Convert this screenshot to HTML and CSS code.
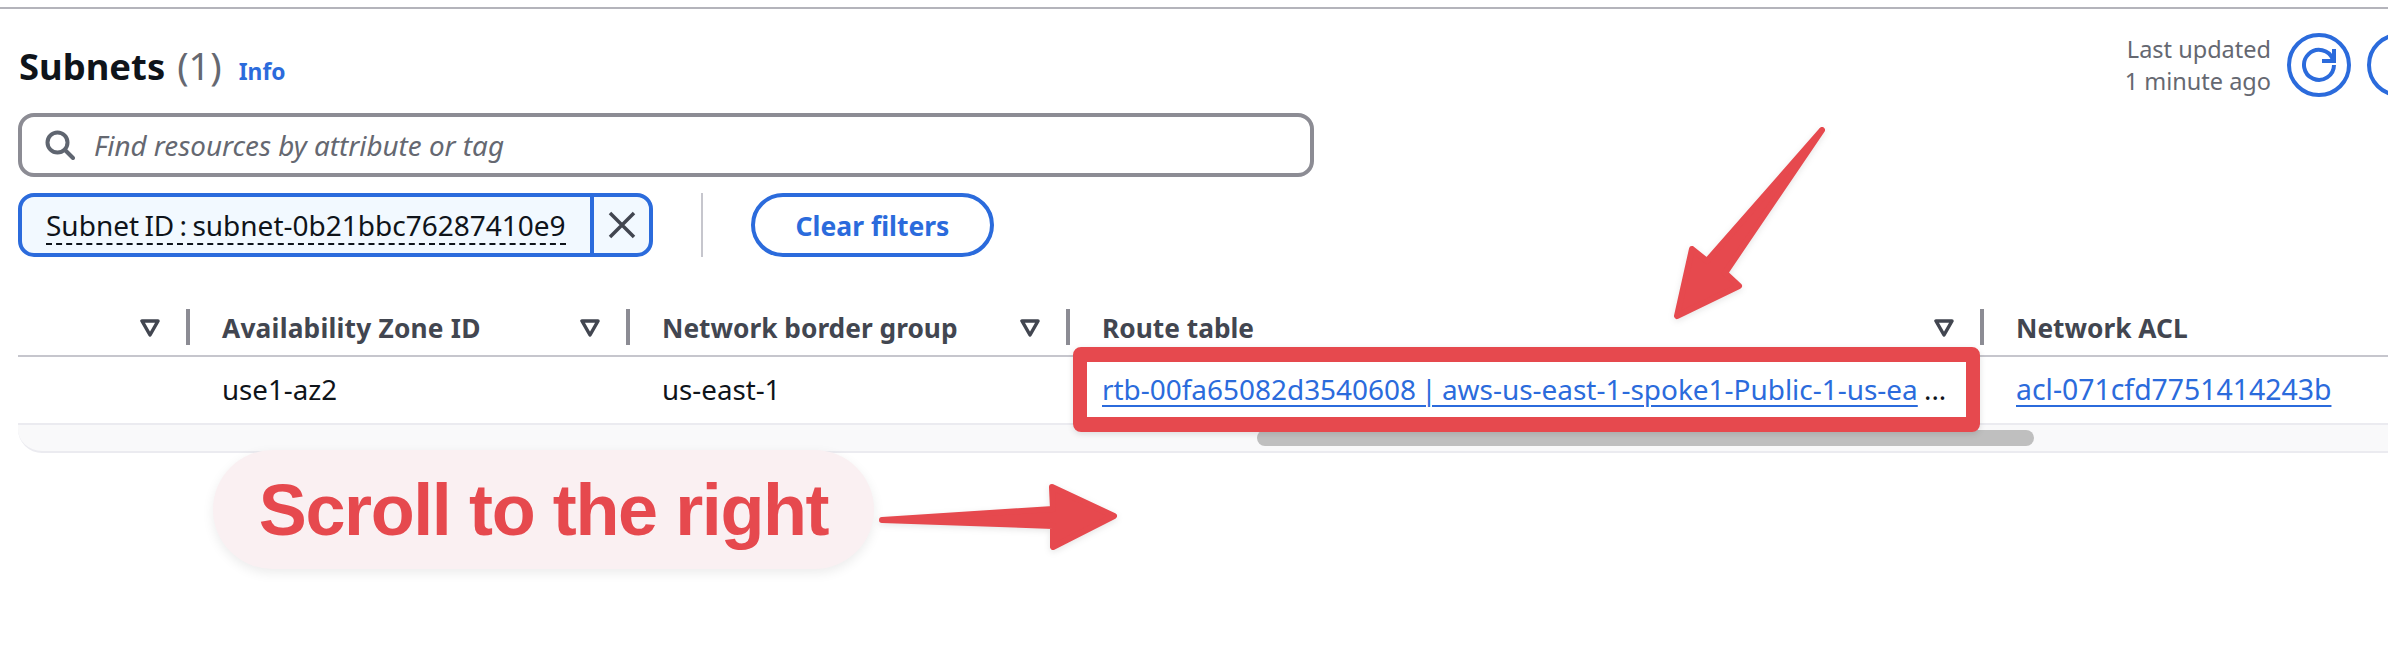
FILE: index.html
```html
<!DOCTYPE html>
<html lang="en">
<head>
<meta charset="utf-8">
<title>Subnets</title>
<link rel="stylesheet" href="styles.css">
</head>
<body>
<div class="page">
  <div class="topline"></div>
  <header class="head">
    <div class="title"><h2>Subnets</h2><span class="count">(1)</span><a class="info">Info</a></div>
    <div class="actions">
      <div class="updated"><div>Last updated</div><div>1 minute ago</div></div>
      <button class="round"><svg width="36" height="36" viewBox="0 0 36 36"><path d="M32 12.5A15 15 0 1 0 33 18" fill="none" stroke="#2b6bdc" stroke-width="4"/><path d="M33 2v12H21" fill="none" stroke="#2b6bdc" stroke-width="4"/></svg></button>
      <button class="round"></button>
    </div>
  </header>
  <div class="search">
    <svg class="search-icon" width="30" height="30" viewBox="0 0 30 30"><circle cx="12.5" cy="12.5" r="10" fill="none" stroke="#5f6570" stroke-width="4"/><path d="M20 20l8 8" stroke="#5f6570" stroke-width="4" stroke-linecap="round"/></svg>
    <span class="placeholder">Find resources by attribute or tag</span>
  </div>
  <div class="filters">
    <div class="chip">
      <span class="chip-label"><span class="chip-text">Subnet ID : subnet-0b21bbc76287410e9</span></span>
      <span class="chip-close"><svg width="28" height="28" viewBox="0 0 28 28"><path d="M2 2l24 24M26 2L2 26" stroke="#424650" stroke-width="3.5"/></svg></span>
    </div>
    <div class="vsep"></div>
    <button class="clear">Clear filters</button>
  </div>
  <div class="table">
    <div class="row hrow">
      <div class="cell c1"><span></span><svg class="tri" viewBox="0 0 20 18"><path d="M2 2h16l-8 14z" fill="none" stroke="#424650" stroke-width="3.5" stroke-linejoin="round"/></svg></div>
      <div class="cell c2"><span>Availability Zone ID</span><svg class="tri" viewBox="0 0 20 18"><path d="M2 2h16l-8 14z" fill="none" stroke="#424650" stroke-width="3.5" stroke-linejoin="round"/></svg></div>
      <div class="cell c3"><span>Network border group</span><svg class="tri" viewBox="0 0 20 18"><path d="M2 2h16l-8 14z" fill="none" stroke="#424650" stroke-width="3.5" stroke-linejoin="round"/></svg></div>
      <div class="cell c4"><span>Route table</span><svg class="tri" viewBox="0 0 20 18"><path d="M2 2h16l-8 14z" fill="none" stroke="#424650" stroke-width="3.5" stroke-linejoin="round"/></svg></div>
      <div class="cell c5"><span>Network ACL</span></div>
    </div>
    <div class="row drow">
      <div class="cell c1"></div>
      <div class="cell c2">use1-az2</div>
      <div class="cell c3">us-east-1</div>
      <div class="cell c4"><a class="link rtb">rtb-00fa65082d3540608 | aws-us-east-1-spoke1-Public-1-us-ea</a><span class="dots">...</span></div>
      <div class="cell c5"><a class="link">acl-071cfd7751414243b</a></div>
    </div>
    <div class="scroller"><div class="thumb"></div></div>
  </div>
  <div class="redbox"></div>
  <div class="callout">Scroll to the right</div>
  <svg class="arrows" width="2388" height="666" viewBox="0 0 2388 666">
    <path d="M882 520L1053 509L1052 487L1114 516L1053 547L1053 526Z"/>
    <path d="M1822 130L1725 273L1739 286L1677 316L1692 249L1707 261Z"/>
  </svg>
</div>
</body>
</html>
```
FILE: styles.css
```css
* { box-sizing: border-box; }
html, body { margin: 0; padding: 0; background: #fff; }
.page {
  position: relative;
  width: 2388px;
  height: 666px;
  overflow: hidden;
  padding-top: 7px;
  font-family: "Noto Sans", "Liberation Sans", sans-serif;
  font-size: 27.7px;
  color: #0f141a;
}
.topline { height: 2px; background: #b4b4bb; }
.head {
  display: flex;
  justify-content: space-between;
  align-items: center;
  height: 64px;
  margin: 24px -43px 16px 19px;
}
.title { display: flex; align-items: baseline; }
.title h2 { margin: 0; font-size: 36.4px; font-weight: 700; }
.count { margin-left: 12px; font-size: 38px; color: #656871; }
.info { margin-left: 17px; font-size: 22.8px; font-weight: 700; color: #2b6bdc; }
.actions { display: flex; align-items: center; gap: 16px; }
.updated { text-align: right; font-size: 23.5px; line-height: 32px; color: #656871; }
.round {
  display: flex;
  align-items: center;
  justify-content: center;
  width: 64px;
  height: 64px;
  padding: 0;
  background: #fff;
  border: 4px solid #2b6bdc;
  border-radius: 50%;
}
.search {
  display: flex;
  align-items: center;
  width: 1296px;
  height: 64px;
  margin-left: 18px;
  padding-left: 23px;
  border: 4px solid #8c8c94;
  border-radius: 16px;
}
.placeholder { margin-left: 19px; font-style: italic; font-size: 27.8px; color: #656871; }
.filters { display: flex; align-items: stretch; height: 64px; margin: 16px 0 52px 18px; }
.chip {
  display: flex;
  width: 635px;
  border: 4px solid #2b6bdc;
  border-radius: 16px;
  background: #f2f9ff;
  overflow: hidden;
}
.chip-label { display: flex; align-items: center; width: 572px; padding-left: 24px; border-right: 4px solid #2b6bdc; }
.chip-text { padding-top: 2px; line-height: 36px; font-size: 28px; word-spacing: -2px; border-bottom: 2px dashed #0f141a; white-space: nowrap; }
.chip-close { display: flex; flex: 1; align-items: center; justify-content: center; }
.vsep { width: 2px; margin-left: 48px; background: #c6c6cd; }
.clear {
  width: 243px;
  margin-left: 48px;
  padding: 2px 0 0;
  font: 700 26.5px "Noto Sans", sans-serif;
  color: #2b6bdc;
  background: #fff;
  border: 4px solid #2b6bdc;
  border-radius: 32px;
}
.table { margin-left: 18px; }
.row { display: grid; grid-template-columns: 172px 440px 440px 914px 1fr; }
.cell { display: flex; align-items: center; min-width: 0; padding-left: 32px; white-space: nowrap; }
.hrow { height: 48px; padding-bottom: 10px; border-bottom: 2px solid #c6c6cd; font-weight: 700; font-size: 26.3px; color: #424650; }
.hrow .cell { position: relative; justify-content: space-between; height: 36px; padding-top: 1px; }
.hrow .c2 span { letter-spacing: .2px; }
.hrow .cell:not(.c5)::after {
  content: "";
  position: absolute;
  top: 0;
  right: 0;
  width: 4px;
  height: 36px;
  background: #8c8c94;
}
.tri { flex: none; width: 20px; height: 18px; margin-right: 30px; }
.drow { height: 68px; padding-bottom: 2px; border-bottom: 2px solid #ebebf0; }
.link { color: #2b6bdc; font-size: 28.4px; text-decoration: underline; text-decoration-thickness: 2px; text-underline-offset: 5px; }
.rtb { display: block; width: 815px; white-space: nowrap; font-size: 27.95px; word-spacing: -2px; }
.dots { margin-left: 7px; }
.scroller { height: 28px; padding: 5px 0 0 1239px; background: #f9f9fa; border-bottom: 2px solid #ebebf0; border-bottom-left-radius: 24px; }
.thumb { width: 777px; height: 16px; background: #bfbfbf; border-radius: 8px; }
.redbox {
  position: absolute;
  left: 1073px;
  top: 347px;
  width: 907px;
  height: 85px;
  border: 15px solid #e6494e;
  border-left-width: 14px;
  border-right-width: 14px;
  border-radius: 8px;
  box-shadow: 0 2px 6px rgba(0, 0, 0, .12);
}
.callout {
  position: absolute;
  left: 213px;
  top: 450px;
  display: flex;
  align-items: center;
  justify-content: center;
  width: 661px;
  height: 119px;
  font: 700 72px "Liberation Sans", Arial, sans-serif;
  letter-spacing: -1.4px;
  color: #e6494e;
  background: #faf0f2;
  border-radius: 60px;
  box-shadow: 0 4px 12px rgba(0, 0, 0, .08);
}
.arrows { position: absolute; left: 0; top: 0; filter: drop-shadow(0 2px 3px rgba(0, 0, 0, .1)); }
.arrows path { fill: #e6494e; stroke: #e6494e; stroke-width: 6; stroke-linejoin: round; }
```
